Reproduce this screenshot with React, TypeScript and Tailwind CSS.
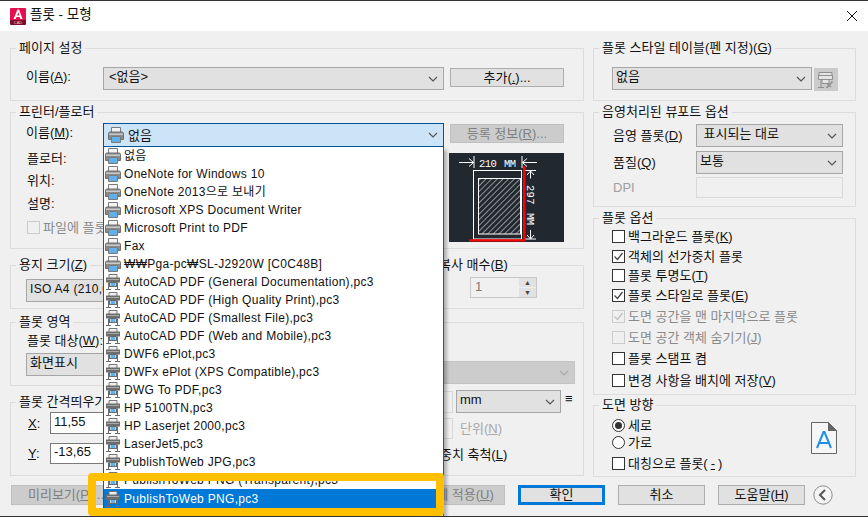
import type { ReactNode } from "react";

const printers = [
  ["없음", "sys"],
  ["OneNote for Windows 10", "sys"],
  ["OneNote 2013으로 보내기", "sys"],
  ["Microsoft XPS Document Writer", "sys"],
  ["Microsoft Print to PDF", "sys"],
  ["Fax", "sys"],
  ["₩₩Pga-pc₩SL-J2920W [C0C48B]", "sys"],
  ["AutoCAD PDF (General Documentation),pc3", "plot"],
  ["AutoCAD PDF (High Quality Print),pc3", "plot"],
  ["AutoCAD PDF (Smallest File),pc3", "plot"],
  ["AutoCAD PDF (Web and Mobile),pc3", "plot"],
  ["DWF6 ePlot,pc3", "plot"],
  ["DWFx ePlot (XPS Compatible),pc3", "plot"],
  ["DWG To PDF,pc3", "plot"],
  ["HP 5100TN,pc3", "plot"],
  ["HP Laserjet 2000,pc3", "plot"],
  ["LaserJet5,pc3", "plot"],
  ["PublishToWeb JPG,pc3", "plot"],
  ["PublishToWeb PNG (Transparent),pc3", "plot"],
  ["PublishToWeb PNG,pc3", "plot"],
  ["PublishToWeb SVG,pc3", "plot"],
];

const plotOptions = [
  { label: "백그라운드 플롯", key: "K", checked: false, disabled: false, cls: "h-[20px]" },
  { label: "객체의 선가중치 플롯", key: "", checked: true, disabled: false, cls: "h-[20px]" },
  { label: "플롯 투명도", key: "T", checked: false, disabled: false, cls: "h-[19px]" },
  { label: "플롯 스타일로 플롯", key: "E", checked: true, disabled: false, cls: "h-[21px]" },
  { label: "도면 공간을 맨 마지막으로 플롯", key: "", checked: true, disabled: true, cls: "h-[21px]" },
  { label: "도면 공간 객체 숨기기", key: "J", checked: false, disabled: true, cls: "h-[21px]" },
  { label: "플롯 스탬프 켬", key: "", checked: false, disabled: false, cls: "h-[21px]" },
  { label: "변경 사항을 배치에 저장", key: "V", checked: false, disabled: false, cls: "h-[22px]" },
];

const Group = ({ title, className, children }: { title: ReactNode; className: string; children?: ReactNode }) => (
  <div className={`relative border border-[#dcdcdc] ${className}`}>
    <div className="absolute -top-[9px] left-[5px] bg-[#f0f0f0] px-[3px] leading-[16px] whitespace-nowrap">{title}</div>
    {children}
  </div>
);

const Chevron = ({ color = "#555" }: { color?: string }) => (
  <svg width="10" height="6" viewBox="0 0 10 6" className="shrink-0">
    <path d="M1 1l4 4 4-4" fill="none" stroke={color} strokeWidth="1.2" />
  </svg>
);

const Select = ({ className, children, disabled }: { className: string; children?: ReactNode; disabled?: boolean }) => (
  <div
    className={`flex shrink-0 items-center justify-between border pl-[3px] pr-[5px] ${
      disabled ? "border-[#c4c4c4] bg-[#cccccc]" : "border-[#a6a6a6] bg-[#e1e1e1]"
    } ${className}`}
  >
    <span className="truncate pb-[3px] leading-[16px]">{children}</span>
    <Chevron color={disabled ? "#a8a8a8" : "#555"} />
  </div>
);

const Button = ({
  className,
  children,
  disabled,
  focused,
}: {
  className: string;
  children: ReactNode;
  disabled?: boolean;
  focused?: boolean;
}) => (
  <div
    className={`flex shrink-0 items-center justify-center pb-[1px] ${
      focused
        ? "border-[3px] border-[#0078d7] bg-[#e1e1e1]"
        : disabled
          ? "border border-[#bfbfbf] bg-[#cccccc] text-[#7f7f7f]"
          : "border border-[#adadad] bg-[#e1e1e1]"
    } ${className}`}
  >
    {children}
  </div>
);

const Input = ({ className, children, disabled }: { className: string; children?: ReactNode; disabled?: boolean }) => (
  <div
    className={`flex shrink-0 items-center border px-[3px] pb-[4px] ${
      disabled ? "border-[#d9d9d9] bg-[#f0f0f0] text-[#7a7a7a]" : "border-[#7a7a7a] bg-white"
    } ${className}`}
  >
    {children}
  </div>
);

const Check = ({ checked, disabled }: { checked?: boolean; disabled?: boolean }) => (
  <div
    className={`flex h-[13px] w-[13px] shrink-0 items-center justify-center border ${
      disabled ? "border-[#cccccc] bg-[#f0f0f0]" : "border-[#333333] bg-white"
    }`}
  >
    {checked && (
      <svg width="11" height="11" viewBox="0 0 11 11">
        <path d="M1.5 5.5l3 3 5-6.5" fill="none" stroke={disabled ? "#c0c0c0" : "#444"} strokeWidth="1.3" />
      </svg>
    )}
  </div>
);

const Radio = ({ checked }: { checked?: boolean }) => (
  <div className="flex h-[13px] w-[13px] shrink-0 items-center justify-center rounded-full border border-[#333333] bg-white">
    {checked && <div className="h-[7px] w-[7px] rounded-full bg-[#333333]" />}
  </div>
);

const PrinterIcon = () => (
  <svg width="16" height="16" viewBox="0 0 16 16" className="shrink-0">
    <path d="M3.5 .5h9v5h-9z" fill="#f4f4f4" stroke="#7a7a7a" />
    <path d="M.5 6.5q0-1.5 1.5-1.5h12q1.5 0 1.5 1.5v6h-15z" fill="#8a8a8a" stroke="#6f6f6f" />
    <path d="M1 6.5h14v1.5H1z" fill="#c9c9c9" />
    <path d="M3.5 9.5h9v6h-9z" fill="#fff" stroke="#7a7a7a" />
    <path d="M4 10h8v5H4z" fill="#62b0ea" />
  </svg>
);

const PlotterIcon = () => (
  <svg width="16" height="16" viewBox="0 0 16 16" className="shrink-0">
    <path d="M4 .5h8v4H4z" fill="#eeeeee" stroke="#777" />
    <path d="M1 3.5h14v5H1z" fill="#6d6d6d" />
    <path d="M2 5h12v1H2z" fill="#a9a9a9" />
    <path d="M4.5 8.5h7v4h-7z" fill="#fff" stroke="#666" />
    <path d="M5.5 9h5v3h-5z" fill="#62b0ea" />
    <path d="M3.5 8.5v7M12.5 8.5v7M1 15.5h5M10 15.5h5M3.5 12.5h9" fill="none" stroke="#6b6b6b" />
  </svg>
);

const PaperPreview = () => (
  <svg width="115" height="89" viewBox="0 0 115 89" className="shrink-0 bg-[#212830]">
    <defs>
      <pattern id="hatch" width="4" height="4" patternUnits="userSpaceOnUse" patternTransform="rotate(45)">
        <line x1="0" y1="0" x2="0" y2="4" stroke="#fff" strokeWidth="1" />
      </pattern>
    </defs>
    <g stroke="#fff" fill="none">
      <path d="M10 9.5h14.5M25 3v12M20 5.5l4.5 4-4.5 4M73 3v12M73.5 9.5H88M78 5.5l-4.5 4 4.5 4" />
      <path d="M76 17.5h11M76 86h11M81.5 17.5v8M81.5 77v9M78 22l3.5-4 3.5 4M78 82l3.5 4 3.5-4" />
      <rect x="24.5" y="17.5" width="48" height="68.5" />
      <rect x="29.5" y="25.5" width="42" height="55.5" fill="url(#hatch)" />
    </g>
    <path d="M74 13h2.5v75.5H20v-2.3h54z" fill="#ff0000" />
    <g fill="#fff" fontSize="10.5" fontFamily="'Liberation Mono', monospace" letterSpacing="-.5">
      <text x="30" y="13.5">210</text>
      <text x="55" y="13.5">MM</text>
      <text transform="translate(77.5 32) rotate(90)" letterSpacing=".3">297</text>
      <text transform="translate(77.5 60) rotate(90)">MM</text>
    </g>
  </svg>
);

export default function App() {
  return (
    <div className="relative flex h-[517px] w-[868px] flex-col overflow-hidden border-y border-[#333333] bg-[#f0f0f0] font-['Liberation_Sans','Noto_Sans_CJK_KR',sans-serif] text-[13px] leading-none text-[#111]">
      {/* title bar */}
      <div className="flex h-[30px] shrink-0 items-center bg-white pl-[10px] pr-[11px]">
        <svg width="16" height="17" viewBox="0 0 16 17" className="shrink-0">
          <path d="M1 0h14a1 1 0 0 1 1 1v11H0V1a1 1 0 0 1 1-1z" fill="#e51050" />
          <path d="M0 12h16v4a1 1 0 0 1-1 1H1a1 1 0 0 1-1-1z" fill="#7a1030" />
          <path d="M3.5 11L7.5 1.5h1.5l3.5 9.5h-2.2l-.7-2H6.5l-.8 2zM7.2 7.5h2.2L8.3 4.2z" fill="#fff" />
          <text x="8" y="16" textAnchor="middle" fontSize="4" fill="#f3c6d2" fontFamily="'Liberation Sans', sans-serif">CAD</text>
        </svg>
        <span className="ml-[4px] pb-[2px] text-[13.5px]">플롯 - 모형</span>
        <svg width="10" height="10" viewBox="0 0 10 10" className="ml-auto">
          <path d="M0 0l10 10M10 0L0 10" stroke="#111" strokeWidth="1" />
        </svg>
      </div>

      <div className="flex shrink-0 gap-[9px] pl-[10px] pt-[17px]">
        {/* left column */}
        <div className="w-[574px] shrink-0">
          <Group title="페이지 설정" className="h-[53px]">
            <div className="flex pl-[15px] pt-[18px]">
              <div className="w-[77px] pt-[3px]">
                이름(<u>A</u>):
              </div>
              <Select className="h-[23px] w-[341px]">
                <span className="pl-[2px]">{"<없음>"}</span>
              </Select>
              <Button className="ml-[6px] mt-[1px] h-[19px] w-[114px]">추가(<u>.</u>)...</Button>
            </div>
          </Group>

          <Group title="프린터/플로터" className="mt-[11px] h-[137px]">
            <div className="flex pl-[15px] pt-[10px]">
              <div className="w-[77px] pt-[3px]">
                이름(<u>M</u>):
              </div>
              <div className="flex h-[24px] w-[341px] shrink-0 items-center justify-between border border-[#005499] bg-[#cce4f7] pl-[3px] pr-[5px]">
                <span className="flex items-center gap-[4px] pl-[1px]">
                  <PrinterIcon />
                  없음
                </span>
                <Chevron />
              </div>
              <Button disabled className="ml-[6px] mt-[1px] h-[19px] w-[114px]">
                등록 정보(<u>R</u>)...
              </Button>
            </div>
            <div className="mt-[6px] flex pl-[16px]">
              <div className="w-[422px] shrink-0">
                <div className="-mt-[5px] h-[22px] pt-[4px]">플로터:</div>
                <div className="h-[23px] pt-[4px]">위치:</div>
                <div className="h-[23px] pt-[4px]">설명:</div>
                <div className="mt-[5px] flex items-center gap-[3px] text-[#8a8a8a]">
                  <Check disabled />
                  파일에 플롯(<u>F</u>)
                </div>
              </div>
              <PaperPreview />
            </div>
          </Group>

          <div className="mt-[16px] flex gap-[4px]">
            <Group title={<>용지 크기(<u>Z</u>)</>} className="h-[44px] w-[410px] shrink-0">
              <div className="pl-[15px] pt-[13px]">
                <Select className="h-[23px] w-[385px]">
                  <span className="text-[12px] tracking-[0.3px]">ISO A4 (210,00 x 297,00 MM)</span>
                </Select>
              </div>
            </Group>
            <Group title={<span className="ml-[6px]">복사 매수(<u>B</u>)</span>} className="h-[44px] flex-1">
              <div className="ml-[45px] mt-[11px] flex h-[21px] w-[67px] border border-[#c8c8c8] bg-[#f0f0f0] text-[#7a7a7a]">
                <div className="flex-1 pl-[4px] pt-[2px]">1</div>
                <div className="flex w-[17px] flex-col gap-[1px] text-[7px] leading-[9px] text-[#444]">
                  <div className="h-[9px] bg-[#e1e1e1] text-center">▲</div>
                  <div className="h-[9px] bg-[#e1e1e1] text-center">▼</div>
                </div>
              </div>
            </Group>
          </div>

          <div className="mt-[13px] flex gap-[4px]">
            <div className="w-[320px] shrink-0">
              <Group title="플롯 영역" className="h-[64px]">
                <div className="pl-[16px] pt-[11px]">
                  플롯 대상(<u>W</u>):
                  <Select className="ml-[-1px] mt-[6px] h-[23px] w-[150px]">화면표시</Select>
                </div>
              </Group>
              <Group title="플롯 간격띄우기(용지 원점)" className="mt-[16px] h-[74px]">
                <div className="flex items-center pl-[17px] pt-[9px]">
                  <span className="w-[22px]">
                    <u>X</u>:
                  </span>
                  <Input className="h-[22px] w-[100px]">11,55</Input>
                </div>
                <div className="mt-[9px] flex items-center pl-[17px]">
                  <span className="w-[22px]">
                    <u>Y</u>:
                  </span>
                  <Input className="h-[21px] w-[100px]">-13,65</Input>
                </div>
              </Group>
            </div>
            <Group title="플롯 축척" className="h-[154px] flex-1">
              <div className="pl-[10px] pt-[38px]">
                <Select disabled className="h-[23px] w-[230px]" />
                <div className="mt-[6px] flex items-center">
                  <Input disabled className="h-[22px] w-[108px]" />
                  <Select className="ml-[3px] h-[23px] w-[105px]">mm</Select>
                  <span className="-mt-[6px] ml-[4px]">≡</span>
                </div>
                <div className="mt-[5px] flex items-center">
                  <Input disabled className="h-[21px] w-[108px]" />
                  <span className="ml-[7px] text-[#a8a8a8]">
                    단위(<u>N</u>)
                  </span>
                </div>
                <div className="ml-[71px] mt-[9px] whitespace-nowrap">
                  선가중치 축척(<u>L</u>)
                </div>
              </div>
            </Group>
          </div>
        </div>

        {/* right column */}
        <div className="w-[263px] shrink-0">
          <Group title={<>플롯 스타일 테이블(펜 지정)(<u>G</u>)</>} className="h-[53px]">
            <div className="flex pl-[18px] pt-[18px]">
              <Select className="h-[23px] w-[200px]">없음</Select>
              <div className="ml-[2px] mt-[1px] flex h-[23px] w-[24px] items-center justify-center bg-[#cbcbcb]">
                <svg width="18" height="18" viewBox="0 0 18 18">
                  <path d="M2 1.5h13v3H2zM1.5 4.5h14v4h-14zM5 8.5h7v4H5z" fill="#e4e4e4" stroke="#8f8f8f" />
                  <path d="M4 8.5v8M1 16.5h6M5 12.5h3" stroke="#8f8f8f" fill="none" />
                  <path d="M9.5 17l6-6.5M14 16l-3.5-3" stroke="#8f8f8f" strokeWidth="1.6" />
                </svg>
              </div>
            </div>
          </Group>

          <Group title="음영처리된 뷰포트 옵션" className="mt-[11px] h-[95px]">
            <div className="flex items-center pl-[19px] pt-[11px]">
              <div className="w-[83px]">
                음영 플롯(<u>D</u>)
              </div>
              <Select className="h-[23px] w-[147px]">&nbsp;표시되는 대로</Select>
            </div>
            <div className="mt-[4px] flex items-center pl-[19px]">
              <div className="w-[83px]">
                품질(<u>Q</u>)
              </div>
              <Select className="h-[23px] w-[147px]">보통</Select>
            </div>
            <div className="mt-[3px] flex items-center pl-[19px]">
              <div className="w-[83px] text-[#a0a0a0]">DPI</div>
              <Input disabled className="h-[21px] w-[147px]" />
            </div>
          </Group>

          <Group title="플롯 옵션" className="mt-[11px] h-[177px]">
            <div className="pl-[18px] pt-[7px]">
              {plotOptions.map((o) => (
                <div key={o.label} className={`flex items-center gap-[3px] ${o.cls} ${o.disabled ? "text-[#8a8a8a]" : ""}`}>
                  <Check checked={o.checked} disabled={o.disabled} />
                  <span>
                    {o.label}
                    {o.key && (
                      <>
                        (<u>{o.key}</u>)
                      </>
                    )}
                  </span>
                </div>
              ))}
            </div>
          </Group>

          <Group title="도면 방향" className="mt-[10px] h-[72px]">
            <div className="flex pl-[18px] pt-[11px]">
              <div className="w-[199px] shrink-0">
                <div className="flex h-[17px] items-center gap-[3px]">
                  <Radio checked />
                  세로
                </div>
                <div className="flex h-[17px] items-center gap-[3px]">
                  <Radio />
                  가로
                </div>
                <div className="mt-[4px] flex h-[17px] items-center gap-[3px]">
                  <Check />
                  대칭으로 플롯(<u>-</u>)
                </div>
              </div>
              <svg width="26" height="32" viewBox="0 0 26 32" className="mt-[5px] shrink-0">
                <path d="M.5.5h17l8 8v23H.5z" fill="#f6f6f6" stroke="#666" />
                <path d="M17 0v9h9z" fill="#666" />
                <path d="M6 26L12.5 10h1L20 26M8 21h10" fill="none" stroke="#1e90e8" strokeWidth="2" />
              </svg>
            </div>
          </Group>
        </div>
      </div>

      {/* bottom buttons */}
      <div className="mt-[8px] flex h-[20px] shrink-0 items-center pl-[11px]">
        <Button disabled className="h-[20px] w-[110px]">미리보기(<u>P</u>)...</Button>
        <Button disabled className="ml-[274px] h-[20px] w-[110px] pl-[6px]">배치에 적용(<u>U</u>)</Button>
        <Button focused className="ml-[13px] h-[20px] w-[87px]">확인</Button>
        <Button className="ml-[13px] h-[20px] w-[87px]">취소</Button>
        <Button className="ml-[13px] h-[20px] w-[87px]">도움말(<u>H</u>)</Button>
        <svg width="20" height="20" viewBox="0 0 20 20" className="ml-[8px] shrink-0">
          <circle cx="10" cy="10" r="9.2" fill="#f4f4f4" stroke="#8c8c8c" />
          <path d="M12 5l-5 5 5 5" fill="none" stroke="#555" strokeWidth="2" />
        </svg>
      </div>

      {/* open printer list */}
      <div className="absolute left-[103px] top-[146px] h-[370px] w-[341px] overflow-hidden border-x border-[#0a5ea8] bg-white text-[12px] tracking-[0.3px] shadow-[3px_3px_3px_rgba(0,0,0,0.25)]">
        {printers.map(([name, kind], i) => (
          <div
            key={name}
            className={`flex items-center gap-[3px] pl-[1px] ${i === 19 ? "h-[19px] bg-[#0078d7] text-white" : "h-[18px]"}`}
          >
            {kind === "sys" ? <PrinterIcon /> : <PlotterIcon />}
            <span className="whitespace-nowrap">{name}</span>
          </div>
        ))}
      </div>

      {/* callout over the selected item */}
      <div className="absolute left-[88px] top-[472px] h-[43px] w-[356px] rounded-[4px] border-[8px] border-[#ffc000]" />
    </div>
  );
}
